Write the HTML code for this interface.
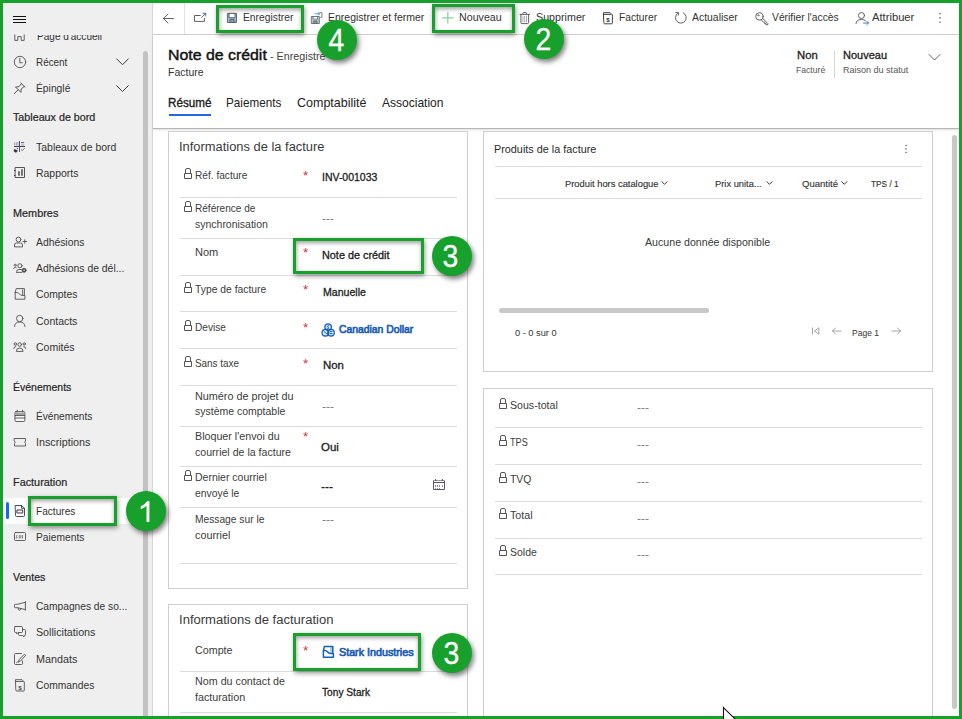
<!DOCTYPE html>
<html><head><meta charset="utf-8"><title>Note de crédit</title>
<style>
*{box-sizing:border-box;margin:0;padding:0}
html,body{width:962px;height:719px;overflow:hidden;background:#fff;font-family:"Liberation Sans",sans-serif;}
#root{position:absolute;left:0;top:0;width:962px;height:719px;overflow:hidden;background:#fff}
.a{position:absolute}
.t{position:absolute;white-space:nowrap;transform-origin:0 50%;font-family:"Liberation Sans",sans-serif;}
.hl{position:absolute;height:1px;background:#dcdcdc}
.sec{position:absolute;background:#fff;border:1px solid #cecece}
.gbox{position:absolute;border:3.2px solid #17a02b;box-shadow:.5px 2px 5px rgba(0,0,0,.45),inset .5px 2px 4px rgba(0,0,0,.38)}
.circ{position:absolute;width:40px;height:40px;border-radius:50%;background:#17a02b;box-shadow:2px 3px 5px rgba(0,0,0,.5);color:#fff;font-size:30.5px;line-height:40.5px;text-align:center;text-indent:-1.2px;-webkit-text-stroke:.3px #fff;font-family:"Liberation Sans",sans-serif}
svg{position:absolute;overflow:visible}
.i{fill:none;stroke:#444;stroke-width:1}
</style></head><body>
<div id="root">
<!-- sidebar -->
<div class="a" style="left:0;top:0;width:153px;height:719px;background:#efefef;border-right:1px solid #d6d6d6"></div>
<div class="a" style="left:143px;top:51px;width:5px;height:668px;background:#c2c2c2;border-radius:3px 3px 0 0"></div>
<!-- selected item -->
<div class="a" style="left:3px;top:498px;width:140px;height:26px;background:#fff"></div>
<div class="a" style="left:6px;top:502px;width:3px;height:17px;background:#0f6cf5;border-radius:1.5px"></div>
<!-- hamburger -->
<div class="a" style="left:13.1px;top:15.7px;width:13px;height:1.1px;background:#111"></div>
<div class="a" style="left:13.1px;top:18.9px;width:13px;height:1.1px;background:#111"></div>
<div class="a" style="left:13.1px;top:22.1px;width:13px;height:1.1px;background:#111"></div>

<!-- main: command bar -->
<div class="a" style="left:153px;top:0;width:809px;height:35px;background:#fff;border-bottom:1px solid #d0d0d0"></div>
<div class="a" style="left:184px;top:3px;width:1px;height:31px;background:#e1e1e1"></div>
<!-- header -->
<div class="a" style="left:153px;top:35px;width:809px;height:94px;background:#fff;border-bottom:1px solid #b6b6b6;box-shadow:0 1px 2px rgba(0,0,0,.14)"></div>
<div class="a" style="left:169px;top:114px;width:42px;height:2px;background:#2266e3"></div>
<div class="a" style="left:834px;top:50px;width:1px;height:28px;background:#d8d8d8"></div>

<!-- sections -->
<div class="sec" style="left:168px;top:131px;width:300px;height:458px"></div>
<div class="sec" style="left:168px;top:604px;width:300px;height:130px"></div>
<div class="sec" style="left:483px;top:131px;width:450px;height:241px"></div>
<div class="sec" style="left:483px;top:388px;width:450px;height:340px"></div>
<!-- right scrollbar -->
<div class="a" style="left:952px;top:135px;width:5px;height:574px;background:#c8c8c8;border-radius:3px"></div>

<!-- lines left section 1 -->
<div class="hl" style="left:180px;top:197px;width:277px"></div>
<div class="hl" style="left:180px;top:238px;width:277px"></div>
<div class="hl" style="left:180px;top:275px;width:277px"></div>
<div class="hl" style="left:180px;top:311px;width:277px"></div>
<div class="hl" style="left:180px;top:348px;width:277px"></div>
<div class="hl" style="left:180px;top:385px;width:277px"></div>
<div class="hl" style="left:180px;top:426px;width:277px"></div>
<div class="hl" style="left:180px;top:466px;width:277px"></div>
<div class="hl" style="left:180px;top:507px;width:277px"></div>
<div class="hl" style="left:180px;top:563px;width:277px"></div>
<div class="hl" style="left:180px;top:671px;width:277px"></div>
<div class="hl" style="left:180px;top:712px;width:277px"></div>
<!-- lines right section 1 -->
<div class="hl" style="left:495px;top:166px;width:427px"></div>
<div class="hl" style="left:495px;top:198px;width:427px"></div>
<div class="a" style="left:499px;top:308px;width:210px;height:5px;background:#c8c8c8;border-radius:3px"></div>
<!-- lines right section 2 -->
<div class="hl" style="left:495px;top:427px;width:427px"></div>
<div class="hl" style="left:495px;top:464px;width:427px"></div>
<div class="hl" style="left:495px;top:501px;width:427px"></div>
<div class="hl" style="left:495px;top:538px;width:427px"></div>
<div class="hl" style="left:495px;top:574px;width:427px"></div>

<svg class="a" style="left:0;top:0" width="962" height="719" viewBox="0 0 962 719" fill="none" stroke="#505050" stroke-width=".9" stroke-linecap="round" stroke-linejoin="round">
<!-- ===== sidebar icons ===== -->
<g id="home" clip-path="url(#cpHome)">
 <path d="M14.800 33 V40.400 H17.800 V36.600 H21.200 V40.400 H24.200 V33"/>
</g>
<clipPath id="cpHome"><rect x="0" y="34.5" width="153" height="20"/></clipPath>
<!-- clock -->
<circle cx="20" cy="62" r="5.7"/><path d="M19.8 58.3 V62.7 H22.4"/>
<path d="M116.700 58.900 L122.500 64.700 L128.300 58.900" stroke="#3a3a3a" stroke-width="1"/>
<!-- pin -->
<g transform="translate(18.2 89.7) rotate(45)"><path d="M-3 -6.6 H3 M-2 -6.6 L-1.6 -2.6 L-3.8 0 H3.8 L1.6 -2.6 L2 -6.6 M0 0 V5.6"/></g>
<path d="M116.700 85.700 L122.500 91.500 L128.300 85.700" stroke="#3a3a3a" stroke-width="1"/>
<!-- dashboards -->
<g stroke-linecap="butt">
 <path d="M19.5 141 V152" stroke="#5b4a8a" stroke-width="1"/>
 <path d="M14 146.5 H25" stroke="#444" stroke-width="1"/>
 <path d="M14.6 142.3 V145.5 M16.4 142.3 V145.5 M17.9 142 V145.5" stroke="#8a8a9a" stroke-width=".8"/>
 <path d="M21 142.6 H24.2" stroke="#566a8a" stroke-width="1.1"/><path d="M21 145 H24.3" stroke="#888" stroke-width=".8"/>
 <path d="M14.6 149.2 A1.7 1.7 0 1 0 17.4 150.6 L16 149.9 Z" fill="#333" stroke="#333" stroke-width=".5"/>
 <circle cx="17.4" cy="148.4" r=".55" fill="#444" stroke="none"/>
 <path d="M21 149.3 L22.4 150.6 L24.6 148.2" stroke="#5a5a7a" stroke-width=".9" fill="none"/>
</g>
<!-- rapports -->
<rect x="15.5" y="167.5" width="9" height="10" stroke="#555" stroke-width="1"/>
<path d="M14 170.5 H15.5 M14 175.5 H15.5" stroke="#444" stroke-width="1" stroke-linecap="butt"/>
<path d="M19 175.8 V171.3 M22 175.8 V169.3" stroke="#666" stroke-width="1.8" stroke-linecap="butt"/>
<!-- adhesions: person + plus -->
<circle cx="18.5" cy="239.5" r="2.4"/><path d="M14.5 246.5 V245 Q14.5 243 16.5 243 H20.5 Q22.5 243 22.5 245 V246.5 Z"/>
<path d="M23 241.5 H26.5 M24.75 239.8 V243.2" stroke-width=".9"/>
<!-- adhesions de del: people + gear -->
<circle cx="19.9" cy="265.8" r="2.1"/>
<path d="M16.7 272.4 V271.5 Q16.7 269.5 18.7 269.5 H21 Q21.8 269.5 22.2 269.9 M16.7 272.4 H22"/>
<circle cx="15.2" cy="265.2" r="1" stroke-width=".8"/><path d="M13.7 268.6 Q13.7 267.3 15.2 267.3 Q16 267.3 16.4 267.7" stroke-width=".8"/>
<circle cx="24.1" cy="270.3" r="2" fill="#4a4a4a" stroke="#4a4a4a" stroke-width=".8"/><circle cx="24.1" cy="270.3" r=".75" fill="#efefef" stroke="none"/>
<!-- comptes -->
<path d="M15.2 292.6 L16.2 288.6 H24.4 V295.4 M15.2 292.6 V299.2 H24.9 V295.4 H22 C20 295.4 19.2 292.6 17 292.6 H15.2 M22.6 290 V295"/>
<!-- contacts -->
<circle cx="19.7" cy="318.5" r="3.2"/><path d="M14.5 326.5 Q14.7 322 19.7 322 Q24.7 322 25 326.5"/>
<!-- comites -->
<circle cx="19.7" cy="344.5" r="1.8"/><path d="M16.3 351 Q16.3 348 19.7 348 Q23.1 348 23.1 351 Z"/>
<circle cx="15.3" cy="344" r="1.2" stroke-width=".9"/><circle cx="24.2" cy="344" r="1.2" stroke-width=".9"/>
<path d="M13.8 348.5 Q13.8 346.5 15.8 346.5 M25.7 348.5 Q25.7 346.5 23.7 346.5" stroke-width=".9"/>
<!-- evenements: calendar -->
<rect x="15" y="411.600" width="9.800" height="9.900" rx="1" fill="#f6f6f6"/><rect x="15.500" y="412.600" width="8.800" height="2.600" fill="#a4a4a4" stroke="none"/><path d="M15 415.500 H24.800 M15 418 H24.800 M17.200 410.200 V412 M22.600 410.200 V412"/>
<!-- inscriptions: ticket -->
<path d="M14.5 438.5 H25.5 V441 Q24 442.2 25.5 443.5 V446 H14.5 V443.5 Q16 442.2 14.5 441 Z"/>
<!-- factures -->
<g stroke="#3a3a3a"><path d="M15.500 505.500 H21.500 L24.500 508.300 V515.700 Q24.500 516.500 23.700 516.500 H16.300 Q15.500 516.500 15.500 515.700 Z M21.500 505.500 V508.300 H24.500"/>
<rect x="17.300" y="510" width="5.400" height="3" stroke-width="1"/></g>
<!-- paiements -->
<rect x="14.500" y="532.500" width="11" height="8" rx="1"/>
<path d="M17 535.300 Q16 535.500 16.500 536.500 Q17.500 537 17 538 Q16.500 538.300 16 538 M19.300 535.500 V538 M20.800 535.500 V538 M22.500 535.500 V538" stroke-width=".7"/>
<!-- campagnes: megaphone -->
<path d="M25.4 601.6 V610.2 M25.400 602.300 L17.500 604.300 H15.300 Q14.500 604.300 14.500 605.100 V606.900 Q14.500 607.700 15.300 607.700 H17.500 L25.400 609.600 M18 607.900 Q18 610.200 19.600 610.200 Q20.800 610.200 21 608.700"/>
<!-- sollicitations: chat bubbles -->
<path d="M15 626.500 H21.500 Q22.500 626.500 22.500 627.500 V631.500 Q22.500 632.500 21.500 632.500 H18 L16.500 634 V632.500 H15.500 Q14.500 632.500 14.500 631.500 V627.500 Q14.500 626.500 15.500 626.500"/>
<path d="M22.500 629.500 H24.500 Q25.500 629.500 25.500 630.500 V634.500 Q25.500 635.500 24.500 635.500 H24 V637 L22.500 635.500 H19.500 Q18.500 635.500 18.500 634.500 V632.500"/>
<!-- mandats: doc + pen -->
<path d="M21.500 653.500 H15.500 Q14.500 653.500 14.500 654.500 V663.500 Q14.500 664.500 15.500 664.500 H21.500 Q22.500 664.500 22.500 663.500 V661"/>
<path d="M25.500 655.500 L20.500 661 L18.500 661.800 L19 659.800 L24 654.500 Z M16.500 662.500 Q17.500 661 18.500 662"/>
<!-- commandes -->
<path d="M15.8 679.7 H22 L24.3 682 V690.2 Q24.3 691 23.500 691 H16.600 Q15.800 691 15.800 690.200 Z M16 681.500 H22.800"/>
<text x="20.050" y="689.500" font-family="Liberation Sans" font-size="6.200" font-weight="700" fill="#444" stroke="none" text-anchor="middle">$</text>

<!-- ===== command bar icons ===== -->
<!-- back -->
<path d="M173.500 18.500 H163.500 M168 14 L163.500 18.500 L168 23"/>
<!-- popout -->
<path d="M200.3 15.5 H194.5 V21.4 H204.4 V18.3"/><path d="M201.6 17.4 L205.6 13.4 M203 13.3 H205.7 V16" stroke="#3a5f9a"/>
<!-- save -->
<g stroke="#5a5a5a" stroke-width=".9">
 <path d="M227.8 13.4 H236.5 V22.5 H227.8 Z" fill="#8cc0ee"/>
 <rect x="229.4" y="13.4" width="5.6" height="4.3" fill="#fff"/>
 <rect x="230.4" y="19.4" width="3.7" height="3.1" fill="#9a9a9a"/>
</g>
<!-- save & close -->
<g stroke="#5f5f5f" stroke-width=".85">
 <path d="M311.7 16.5 H319.3 V23.5 H311.7 Z" fill="#b5d5f0"/>
 <rect x="313.3" y="16.5" width="4.2" height="2.6" fill="#fff" stroke-width=".7"/>
 <rect x="313.6" y="20.8" width="3.6" height="2.7" fill="#8a8a8a" stroke-width=".6"/>
 <path d="M320 12.6 H321.9 V17.4 H320.6" stroke-width=".8"/>
 <path d="M315 13.8 H319.6 M318.2 12.5 L319.7 13.8 L318.2 15.1" stroke="#4a8ad4" stroke-width=".9"/>
</g>
<!-- plus -->
<path d="M447.8 12.2 V23.6 M442.1 17.9 H453.6" stroke="#8fd0a2" stroke-width="1.3" stroke-linecap="butt"/>
<!-- trash -->
<path d="M520 14.4 H529.5 M523 14.2 V13.2 Q523 12.5 523.7 12.5 H525.8 Q526.5 12.5 526.5 13.2 V14.2 M520.9 14.5 V22.6 Q520.9 23.6 521.9 23.6 H527.6 Q528.6 23.6 528.6 22.6 V14.5"/>
<path d="M523 16.2 V22 M524.75 16.2 V22 M526.5 16.2 V22" stroke="#9a9a9a" stroke-width=".8"/>
<!-- facturer doc -->
<g stroke="#3a3a3a" stroke-width=".95">
<path d="M603.8 12.7 H610.2 L612.4 14.9 V23 Q612.4 23.8 611.600 23.8 H604.600 Q603.8 23.8 603.8 23 Z M604 14.4 H610.8"/>
</g>
<text x="608.1" y="22.3" font-family="Liberation Sans" font-size="6.2" font-weight="700" fill="#333" stroke="none" text-anchor="middle">$</text>
<!-- refresh -->
<path d="M683.3 12.9 A5.4 5.4 0 1 1 677.6 13.4 M675.9 12.6 H678.4 V15.1"/>
<!-- key / verify -->
<circle cx="759.4" cy="16.4" r="3.7"/><circle cx="758.3" cy="15.3" r=".7" stroke-width=".6"/><path d="M762.6 18.300 L767.900 23.600 V24.700 H765.900 L765.900 23.500 H764.6 V22.2 H763.4 L761.300 20"/>
<!-- attribuer -->
<circle cx="861.500" cy="15.500" r="3"/><path d="M856 23.500 Q856.300 19.500 861.500 19.500 Q864 19.500 865.300 20.500"/>
<path d="M863.500 23 H868.500 M866.800 21.300 L868.500 23 L866.800 24.700" stroke="#2f6fc0"/>
<!-- more -->
<g fill="#6a6a6a" stroke="none"><circle cx="940" cy="13.6" r=".8"/><circle cx="940" cy="17.9" r=".8"/><circle cx="940" cy="22.2" r=".8"/></g>

<!-- header chevron -->
<path d="M929 54.500 L934.500 60 L940 54.500"/>

<!-- ===== form icons ===== -->
<path d="M184.5 173.5 H191.5 V178.5 H184.5 Z M185.5 173 V170 Q185.5 168.5 187.0 168.5 H189.0 Q190.5 168.5 190.5 170 V173" stroke="#555" stroke-width="1" stroke-linecap="butt" stroke-linejoin="miter"/>
<path d="M184.5 206.5 H191.5 V211.5 H184.5 Z M185.5 206 V203 Q185.5 201.5 187.0 201.5 H189.0 Q190.5 201.5 190.5 203 V206" stroke="#555" stroke-width="1" stroke-linecap="butt" stroke-linejoin="miter"/>
<path d="M184.5 287.5 H191.5 V292.5 H184.5 Z M185.5 287 V284 Q185.5 282.5 187.0 282.5 H189.0 Q190.5 282.5 190.5 284 V287" stroke="#555" stroke-width="1" stroke-linecap="butt" stroke-linejoin="miter"/>
<path d="M184.5 325.5 H191.5 V330.5 H184.5 Z M185.5 325 V322 Q185.5 320.5 187.0 320.5 H189.0 Q190.5 320.5 190.5 322 V325" stroke="#555" stroke-width="1" stroke-linecap="butt" stroke-linejoin="miter"/>
<path d="M184.5 361.5 H191.5 V366.5 H184.5 Z M185.5 361 V358 Q185.5 356.5 187.0 356.5 H189.0 Q190.5 356.5 190.5 358 V361" stroke="#555" stroke-width="1" stroke-linecap="butt" stroke-linejoin="miter"/>
<path d="M184.5 475.5 H191.5 V480.5 H184.5 Z M185.5 475 V472 Q185.5 470.5 187.0 470.5 H189.0 Q190.5 470.5 190.5 472 V475" stroke="#555" stroke-width="1" stroke-linecap="butt" stroke-linejoin="miter"/>
<path d="M499.5 403.5 H506.5 V408.5 H499.5 Z M500.5 403 V400 Q500.5 398.5 502.0 398.5 H504.0 Q505.5 398.5 505.5 400 V403" stroke="#555" stroke-width="1" stroke-linecap="butt" stroke-linejoin="miter"/>
<path d="M499.5 440.5 H506.5 V445.5 H499.5 Z M500.5 440 V437 Q500.5 435.5 502.0 435.5 H504.0 Q505.5 435.5 505.5 437 V440" stroke="#555" stroke-width="1" stroke-linecap="butt" stroke-linejoin="miter"/>
<path d="M499.5 477.5 H506.5 V482.5 H499.5 Z M500.5 477 V474 Q500.5 472.5 502.0 472.5 H504.0 Q505.5 472.5 505.5 474 V477" stroke="#555" stroke-width="1" stroke-linecap="butt" stroke-linejoin="miter"/>
<path d="M499.5 513.5 H506.5 V518.5 H499.5 Z M500.5 513 V510 Q500.5 508.5 502.0 508.5 H504.0 Q505.5 508.5 505.5 510 V513" stroke="#555" stroke-width="1" stroke-linecap="butt" stroke-linejoin="miter"/>
<path d="M499.5 550.5 H506.5 V555.5 H499.5 Z M500.5 550 V547 Q500.5 545.5 502.0 545.5 H504.0 Q505.5 545.5 505.5 547 V550" stroke="#555" stroke-width="1" stroke-linecap="butt" stroke-linejoin="miter"/>
<!-- currency icon -->
<g stroke="#1560bd" stroke-width="1.3" fill="rgba(21,96,189,.13)">
 <circle cx="328.15" cy="327.1" r="3.3"/><circle cx="325.4" cy="332.7" r="3.3"/><circle cx="331" cy="332.7" r="3.3"/>
 <path d="M329 325.6 Q327.2 325.3 327.4 326.8 Q329.2 327.3 328.8 328.6 Q327.6 328.9 327 328.4" stroke-width=".9" fill="none"/>
 <path d="M324 331.5 L326.8 333.8 M330 331.6 H332.2 M330 333.6 H332.2" stroke-width="1" fill="none"/>
</g>
<!-- account icon -->
<g stroke="#1560bd" stroke-width="1.5">
 <path d="M323.4 650.6 L324.4 646.4 H332.8 V653.6 M323.4 650.6 V657.2 H333.4 V653.6 H330.4 C328.2 653.6 327.4 650.6 325.2 650.6 H323.4"/>
 <path d="M331 647.5 V653" stroke-width=".9" stroke="#4f86d0"/>
</g>
<!-- calendar in date field -->
<g stroke="#5a5a5a" stroke-width="1" stroke-linecap="butt">
 <path d="M433.5 480.5 V489.5 H444.5 V480.5" />
 <path d="M433.5 480.5 H444.5" stroke="#9a9a9a"/>
 <path d="M433 482.5 H445"/>
 <path d="M435.5 479 V481 M442.500 479 V481" stroke="#6a4a8a"/>
 <path d="M435.5 485 V487 M437.500 485 V487 M439.500 485 V487 M442.500 485 V487 M435.500 488 V489 M437.500 488 V489 M439.500 488 V489" stroke="#9a8ab0" stroke-width="1"/>
</g>
<!-- subgrid more -->
<g fill="#666" stroke="none"><circle cx="906" cy="145.500" r=".8"/><circle cx="906" cy="149" r=".8"/><circle cx="906" cy="152.500" r=".8"/></g>
<!-- column chevrons -->
<g stroke="#333" stroke-width="1">
 <path d="M661.9 181.7 L664.5 184.3 L667.1 181.7"/>
 <path d="M766.900 181.700 L769.500 184.300 L772.100 181.700"/>
 <path d="M841.700 181.700 L844.300 184.300 L846.900 181.700"/>
</g>
<!-- pager -->
<g stroke="#9a9a9a" stroke-width=".9">
 <path d="M812.500 328 V334 M818.500 328 L814.500 331 L818.500 334 Z"/>
 <path d="M841 331 H832.500 M835.500 328 L832.500 331 L835.500 334"/>
 <path d="M892 331 H900.500 M897.500 328 L900.500 331 L897.500 334"/>
</g>
</svg>


<div class="a" id="pd-clip" style="left:3px;top:34.5px;width:140px;height:14px;overflow:hidden"><span class="t" style="left:33.9px;top:-5.5px;font-size:11.4px;line-height:14px;color:#333;transform:scaleX(.882)">Page d'accueil</span></div>
<span class="t" style="left:36.32px;top:55px;font-size:11.4px;line-height:14px;font-weight:400;color:#333;transform:scaleX(0.8688);">Récent</span>
<span class="t" style="left:36.32px;top:81px;font-size:11.4px;line-height:14px;font-weight:400;color:#333;transform:scaleX(0.9042);">Épinglé</span>
<span class="t" style="left:13.33px;top:111px;font-size:11.2px;line-height:13px;font-weight:400;color:#262626;transform:scaleX(0.9592);-webkit-text-stroke:0.21px #262626;">Tableaux de bord</span>
<span class="t" style="left:36.32px;top:140px;font-size:11.4px;line-height:14px;font-weight:400;color:#333;transform:scaleX(0.9194);">Tableaux de bord</span>
<span class="t" style="left:36.32px;top:166px;font-size:11.4px;line-height:14px;font-weight:400;color:#333;transform:scaleX(0.9162);">Rapports</span>
<span class="t" style="left:13.33px;top:207px;font-size:11.2px;line-height:13px;font-weight:400;color:#262626;transform:scaleX(0.9724);-webkit-text-stroke:0.21px #262626;">Membres</span>
<span class="t" style="left:36.32px;top:235px;font-size:11.4px;line-height:14px;font-weight:400;color:#333;transform:scaleX(0.9090);">Adhésions</span>
<span class="t" style="left:36.32px;top:261px;font-size:11.4px;line-height:14px;font-weight:400;color:#333;transform:scaleX(0.9120);">Adhésions de dél...</span>
<span class="t" style="left:36.32px;top:287px;font-size:11.4px;line-height:14px;font-weight:400;color:#333;transform:scaleX(0.9071);">Comptes</span>
<span class="t" style="left:36.32px;top:314px;font-size:11.4px;line-height:14px;font-weight:400;color:#333;transform:scaleX(0.9201);">Contacts</span>
<span class="t" style="left:36.32px;top:340px;font-size:11.4px;line-height:14px;font-weight:400;color:#333;transform:scaleX(0.9229);">Comités</span>
<span class="t" style="left:13.33px;top:381px;font-size:11.2px;line-height:13px;font-weight:400;color:#262626;transform:scaleX(0.9381);-webkit-text-stroke:0.21px #262626;">Événements</span>
<span class="t" style="left:36.32px;top:409px;font-size:11.4px;line-height:14px;font-weight:400;color:#333;transform:scaleX(0.8900);">Événements</span>
<span class="t" style="left:36.32px;top:435px;font-size:11.4px;line-height:14px;font-weight:400;color:#333;transform:scaleX(0.9433);">Inscriptions</span>
<span class="t" style="left:13.33px;top:476px;font-size:11.2px;line-height:13px;font-weight:400;color:#262626;transform:scaleX(0.9709);-webkit-text-stroke:0.21px #262626;">Facturation</span>
<span class="t" style="left:36.32px;top:504px;font-size:11.4px;line-height:14px;font-weight:400;color:#333;transform:scaleX(0.8882);">Factures</span>
<span class="t" style="left:36.32px;top:530px;font-size:11.4px;line-height:14px;font-weight:400;color:#333;transform:scaleX(0.8984);">Paiements</span>
<span class="t" style="left:13.33px;top:571px;font-size:11.2px;line-height:13px;font-weight:400;color:#262626;transform:scaleX(0.9451);-webkit-text-stroke:0.21px #262626;">Ventes</span>
<span class="t" style="left:36.32px;top:599px;font-size:11.4px;line-height:14px;font-weight:400;color:#333;transform:scaleX(0.8961);">Campagnes de so...</span>
<span class="t" style="left:36.32px;top:625px;font-size:11.4px;line-height:14px;font-weight:400;color:#333;transform:scaleX(0.9376);">Sollicitations</span>
<span class="t" style="left:36.32px;top:652px;font-size:11.4px;line-height:14px;font-weight:400;color:#333;transform:scaleX(0.9464);">Mandats</span>
<span class="t" style="left:36.32px;top:678px;font-size:11.4px;line-height:14px;font-weight:400;color:#333;transform:scaleX(0.9037);">Commandes</span>
<span class="t" style="left:243.33px;top:11px;font-size:11.1px;line-height:13px;font-weight:400;color:#333;transform:scaleX(0.9277);">Enregistrer</span>
<span class="t" style="left:328.33px;top:11px;font-size:11.1px;line-height:13px;font-weight:400;color:#333;transform:scaleX(0.9470);">Enregistrer et fermer</span>
<span class="t" style="left:458.73px;top:11px;font-size:11.1px;line-height:13px;font-weight:400;color:#333;transform:scaleX(0.9621);">Nouveau</span>
<span class="t" style="left:535.73px;top:11px;font-size:11.1px;line-height:13px;font-weight:400;color:#333;transform:scaleX(0.9659);">Supprimer</span>
<span class="t" style="left:619.33px;top:11px;font-size:11.1px;line-height:13px;font-weight:400;color:#333;transform:scaleX(0.9208);">Facturer</span>
<span class="t" style="left:691.93px;top:11px;font-size:11.1px;line-height:13px;font-weight:400;color:#333;transform:scaleX(0.9389);">Actualiser</span>
<span class="t" style="left:771.93px;top:11px;font-size:11.1px;line-height:13px;font-weight:400;color:#333;transform:scaleX(0.9296);">Vérifier l&#x27;accès</span>
<span class="t" style="left:872.13px;top:11px;font-size:11.1px;line-height:13px;font-weight:400;color:#333;transform:scaleX(1.0096);">Attribuer</span>
<span class="t" style="left:168.09px;top:46px;font-size:15.2px;line-height:18px;font-weight:400;color:#111;transform:scaleX(1.0450);-webkit-text-stroke:0.43px #111;">Note de crédit</span>
<span class="t" style="left:270.35px;top:50px;font-size:10.8px;line-height:13px;font-weight:400;color:#444;transform:scaleX(0.9962);">- Enregistré</span>
<span class="t" style="left:168.12px;top:65px;font-size:11.3px;line-height:14px;font-weight:400;color:#333;transform:scaleX(0.9282);">Facture</span>
<span class="t" style="left:168.26px;top:96px;font-size:12.4px;line-height:15px;font-weight:400;color:#222;transform:scaleX(0.9423);-webkit-text-stroke:0.35px #222;">Résumé</span>
<span class="t" style="left:226.46px;top:96px;font-size:12.4px;line-height:15px;font-weight:400;color:#222;transform:scaleX(0.9442);">Paiements</span>
<span class="t" style="left:297.26px;top:96px;font-size:12.4px;line-height:15px;font-weight:400;color:#222;transform:scaleX(1.0088);">Comptabilité</span>
<span class="t" style="left:382.26px;top:96px;font-size:12.4px;line-height:15px;font-weight:400;color:#222;transform:scaleX(0.9701);">Association</span>
<span class="t" style="left:796.93px;top:49px;font-size:11.1px;line-height:13px;font-weight:400;color:#222;transform:scaleX(1.0187);-webkit-text-stroke:0.31px #222;">Non</span>
<span class="t" style="left:796.41px;top:64px;font-size:9.8px;line-height:12px;font-weight:400;color:#555;transform:scaleX(0.8784);">Facturé</span>
<span class="t" style="left:843.33px;top:49px;font-size:11.1px;line-height:13px;font-weight:400;color:#222;transform:scaleX(0.9914);-webkit-text-stroke:0.31px #222;">Nouveau</span>
<span class="t" style="left:843.41px;top:64px;font-size:9.8px;line-height:12px;font-weight:400;color:#555;transform:scaleX(0.9205);">Raison du statut</span>
<span class="t" style="left:179.25px;top:140px;font-size:12.5px;line-height:15px;font-weight:400;color:#3a3a3a;transform:scaleX(1.0316);">Informations de la facture</span>
<span class="t" style="left:195.33px;top:169px;font-size:11.1px;line-height:13px;font-weight:400;color:#3c3c3c;transform:scaleX(0.9127);">Réf. facture</span>
<span class="t" style="left:322.34px;top:171px;font-size:11.0px;line-height:13px;font-weight:400;color:#222;transform:scaleX(0.9520);-webkit-text-stroke:0.31px #222;">INV-001033</span>
<span class="t" style="left:195.33px;top:202px;font-size:11.1px;line-height:13px;font-weight:400;color:#3c3c3c;transform:scaleX(0.9059);">Référence de</span>
<span class="t" style="left:195.33px;top:218px;font-size:11.1px;line-height:13px;font-weight:400;color:#3c3c3c;transform:scaleX(0.9448);">synchronisation</span>
<span class="t" style="left:322.2px;top:213px;font-size:10px;line-height:12px;font-weight:400;color:#7a7a7a;transform:scaleX(1.2100);">---</span>
<span class="t" style="left:195.33px;top:246px;font-size:11.1px;line-height:13px;font-weight:400;color:#3c3c3c;transform:scaleX(0.9958);">Nom</span>
<span class="t" style="left:321.54px;top:249px;font-size:11.0px;line-height:13px;font-weight:400;color:#222;transform:scaleX(0.9859);-webkit-text-stroke:0.31px #222;">Note de crédit</span>
<span class="t" style="left:195.33px;top:283px;font-size:11.1px;line-height:13px;font-weight:400;color:#3c3c3c;transform:scaleX(0.9327);">Type de facture</span>
<span class="t" style="left:322.94px;top:286px;font-size:11.0px;line-height:13px;font-weight:400;color:#222;transform:scaleX(0.9615);-webkit-text-stroke:0.31px #222;">Manuelle</span>
<span class="t" style="left:195.33px;top:321px;font-size:11.1px;line-height:13px;font-weight:400;color:#3c3c3c;transform:scaleX(0.9091);">Devise</span>
<span class="t" style="left:338.94px;top:323px;font-size:11.0px;line-height:13px;font-weight:400;color:#1c5bb5;transform:scaleX(0.9421);-webkit-text-stroke:0.68px #1c5bb5;">Canadian Dollar</span>
<span class="t" style="left:195.33px;top:357px;font-size:11.1px;line-height:13px;font-weight:400;color:#3c3c3c;transform:scaleX(0.8925);">Sans taxe</span>
<span class="t" style="left:322.74px;top:359px;font-size:11.0px;line-height:13px;font-weight:400;color:#222;transform:scaleX(1.0363);-webkit-text-stroke:0.31px #222;">Non</span>
<span class="t" style="left:195.33px;top:390px;font-size:11.1px;line-height:13px;font-weight:400;color:#3c3c3c;transform:scaleX(0.9743);">Numéro de projet du</span>
<span class="t" style="left:195.33px;top:405px;font-size:11.1px;line-height:13px;font-weight:400;color:#3c3c3c;transform:scaleX(0.9452);">système comptable</span>
<span class="t" style="left:322.2px;top:401px;font-size:10px;line-height:12px;font-weight:400;color:#7a7a7a;transform:scaleX(1.2100);">---</span>
<span class="t" style="left:195.33px;top:430px;font-size:11.1px;line-height:13px;font-weight:400;color:#3c3c3c;transform:scaleX(0.9645);">Bloquer l&#x27;envoi du</span>
<span class="t" style="left:195.33px;top:446px;font-size:11.1px;line-height:13px;font-weight:400;color:#3c3c3c;transform:scaleX(0.9545);">courriel de la facture</span>
<span class="t" style="left:321.14px;top:441px;font-size:11.0px;line-height:13px;font-weight:400;color:#222;transform:scaleX(1.0406);-webkit-text-stroke:0.31px #222;">Oui</span>
<span class="t" style="left:195.33px;top:471px;font-size:11.1px;line-height:13px;font-weight:400;color:#3c3c3c;transform:scaleX(0.9459);">Dernier courriel</span>
<span class="t" style="left:195.33px;top:487px;font-size:11.1px;line-height:13px;font-weight:400;color:#3c3c3c;transform:scaleX(0.9335);">envoyé le</span>
<span class="t" style="left:321.0px;top:481px;font-size:10px;line-height:12px;font-weight:700;color:#222;transform:scaleX(1.2000);">---</span>
<span class="t" style="left:195.33px;top:513px;font-size:11.1px;line-height:13px;font-weight:400;color:#3c3c3c;transform:scaleX(0.9217);">Message sur le</span>
<span class="t" style="left:195.33px;top:529px;font-size:11.1px;line-height:13px;font-weight:400;color:#3c3c3c;transform:scaleX(0.9715);">courriel</span>
<span class="t" style="left:322.2px;top:514px;font-size:10px;line-height:12px;font-weight:400;color:#7a7a7a;transform:scaleX(1.2100);">---</span>
<span class="t" style="left:179.25px;top:613px;font-size:12.5px;line-height:15px;font-weight:400;color:#3a3a3a;transform:scaleX(1.0439);">Informations de facturation</span>
<span class="t" style="left:195.33px;top:644px;font-size:11.1px;line-height:13px;font-weight:400;color:#3c3c3c;transform:scaleX(0.9660);">Compte</span>
<span class="t" style="left:338.94px;top:646px;font-size:11.0px;line-height:13px;font-weight:400;color:#1c5bb5;transform:scaleX(0.9751);-webkit-text-stroke:0.68px #1c5bb5;">Stark Industries</span>
<span class="t" style="left:195.33px;top:675px;font-size:11.1px;line-height:13px;font-weight:400;color:#3c3c3c;transform:scaleX(0.9669);">Nom du contact de</span>
<span class="t" style="left:195.33px;top:691px;font-size:11.1px;line-height:13px;font-weight:400;color:#3c3c3c;transform:scaleX(0.9677);">facturation</span>
<span class="t" style="left:321.64px;top:686px;font-size:11.0px;line-height:13px;font-weight:400;color:#222;transform:scaleX(0.9240);-webkit-text-stroke:0.31px #222;">Tony Stark</span>
<span class="t" style="left:302.8px;top:169px;font-size:12.5px;line-height:15px;font-weight:400;color:#d13438;transform:scaleX(1.0872);">*</span>
<span class="t" style="left:302.8px;top:246px;font-size:12.5px;line-height:15px;font-weight:400;color:#d13438;transform:scaleX(1.0872);">*</span>
<span class="t" style="left:302.8px;top:283px;font-size:12.5px;line-height:15px;font-weight:400;color:#d13438;transform:scaleX(1.0872);">*</span>
<span class="t" style="left:302.8px;top:321px;font-size:12.5px;line-height:15px;font-weight:400;color:#d13438;transform:scaleX(1.0872);">*</span>
<span class="t" style="left:302.8px;top:357px;font-size:12.5px;line-height:15px;font-weight:400;color:#d13438;transform:scaleX(1.0872);">*</span>
<span class="t" style="left:302.8px;top:430px;font-size:12.5px;line-height:15px;font-weight:400;color:#d13438;transform:scaleX(1.0872);">*</span>
<span class="t" style="left:302.8px;top:644px;font-size:12.5px;line-height:15px;font-weight:400;color:#d13438;transform:scaleX(1.0872);">*</span>
<span class="t" style="left:494.33px;top:143px;font-size:11.1px;line-height:13px;font-weight:400;color:#2a2a2a;transform:scaleX(0.9761);">Produits de la facture</span>
<span class="t" style="left:565.11px;top:178px;font-size:9.8px;line-height:12px;font-weight:400;color:#333;transform:scaleX(0.9536);-webkit-text-stroke:0.14px #333;">Produit hors catalogue</span>
<span class="t" style="left:714.91px;top:178px;font-size:9.8px;line-height:12px;font-weight:400;color:#333;transform:scaleX(0.9523);-webkit-text-stroke:0.14px #333;">Prix unita...</span>
<span class="t" style="left:802.21px;top:178px;font-size:9.8px;line-height:12px;font-weight:400;color:#333;transform:scaleX(0.9739);-webkit-text-stroke:0.14px #333;">Quantité</span>
<span class="t" style="left:871.41px;top:178px;font-size:9.8px;line-height:12px;font-weight:400;color:#333;transform:scaleX(0.8442);-webkit-text-stroke:0.14px #333;">TPS / 1</span>
<span class="t" style="left:645.35px;top:236px;font-size:10.8px;line-height:13px;font-weight:400;color:#3a3a3a;transform:scaleX(0.9844);">Aucune donnée disponible</span>
<span class="t" style="left:515.02px;top:327px;font-size:9.6px;line-height:12px;font-weight:400;color:#333;transform:scaleX(0.9620);">0 - 0 sur 0</span>
<span class="t" style="left:852.42px;top:327px;font-size:9.7px;line-height:12px;font-weight:400;color:#333;transform:scaleX(0.8776);">Page 1</span>
<span class="t" style="left:510.23px;top:399px;font-size:11.1px;line-height:13px;font-weight:400;color:#3c3c3c;transform:scaleX(0.9557);">Sous-total</span>
<span class="t" style="left:510.23px;top:436px;font-size:11.1px;line-height:13px;font-weight:400;color:#3c3c3c;transform:scaleX(0.8221);">TPS</span>
<span class="t" style="left:510.23px;top:473px;font-size:11.1px;line-height:13px;font-weight:400;color:#3c3c3c;transform:scaleX(0.9398);">TVQ</span>
<span class="t" style="left:510.23px;top:509px;font-size:11.1px;line-height:13px;font-weight:400;color:#3c3c3c;transform:scaleX(0.9660);">Total</span>
<span class="t" style="left:510.23px;top:546px;font-size:11.1px;line-height:13px;font-weight:400;color:#3c3c3c;transform:scaleX(0.9459);">Solde</span>
<span class="t" style="left:637.1px;top:402px;font-size:10px;line-height:12px;font-weight:400;color:#7a7a7a;transform:scaleX(1.2100);">---</span>
<span class="t" style="left:637.1px;top:439px;font-size:10px;line-height:12px;font-weight:400;color:#7a7a7a;transform:scaleX(1.2100);">---</span>
<span class="t" style="left:637.1px;top:476px;font-size:10px;line-height:12px;font-weight:400;color:#7a7a7a;transform:scaleX(1.2100);">---</span>
<span class="t" style="left:637.1px;top:513px;font-size:10px;line-height:12px;font-weight:400;color:#7a7a7a;transform:scaleX(1.2100);">---</span>
<span class="t" style="left:637.1px;top:549px;font-size:10px;line-height:12px;font-weight:400;color:#7a7a7a;transform:scaleX(1.2100);">---</span>

<!-- annotations -->
<div class="gbox" style="left:216px;top:5px;width:88px;height:28px"></div>
<div class="gbox" style="left:432px;top:4px;width:83px;height:29px"></div>
<div class="gbox" style="left:293px;top:238px;width:131px;height:36px"></div>
<div class="gbox" style="left:293px;top:633px;width:128px;height:38px"></div>
<div class="gbox" style="left:28px;top:496px;width:89px;height:30px"></div>
<div class="circ" style="left:317.1px;top:20.4px"><span style="display:inline-block;transform:scaleX(.93)">4</span></div>
<div class="circ" style="left:524px;top:19.2px"><span style="display:inline-block;transform:scaleX(.93)">2</span></div>
<div class="circ" style="left:431.9px;top:235.9px"><span style="display:inline-block;transform:scaleX(.93)">3</span></div>
<div class="circ" style="left:125.9px;top:491px"></div>
<svg class="a" style="left:0;top:0" width="962" height="719" viewBox="0 0 962 719"><path d="M149.4 501 V522 H146.5 V505.700 Q144.300 507.900 140.700 509.200 V506.400 Q145 504.600 147.300 501 Z" fill="#fff"/></svg>
<div class="circ" style="left:432.4px;top:633.2px"><span style="display:inline-block;transform:scaleX(.93)">3</span></div>

<!-- outer green frame -->
<div class="a" style="left:0;top:0;width:962px;height:719px;border:3px solid #17a02b;pointer-events:none"></div>
<svg class="a" id="cursor" style="left:0;top:0" width="962" height="719" viewBox="0 0 962 719"><path d="M723.5 707.6 V721 H737 Z" fill="#fff" stroke="#15151f" stroke-width="1.1" stroke-linejoin="miter"/></svg>
</div>
</body></html>
